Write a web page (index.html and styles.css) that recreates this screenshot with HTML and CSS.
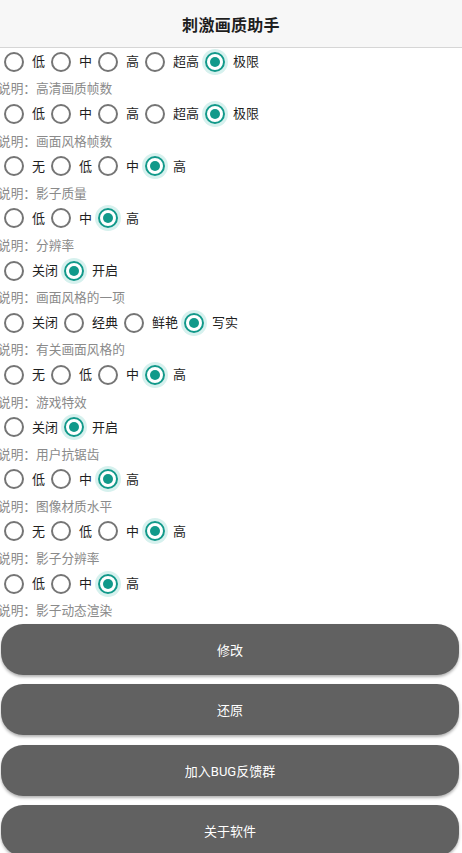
FILE: index.html
```html
<!DOCTYPE html>
<html lang="zh">
<head>
<meta charset="utf-8">
<title>刺激画质助手</title>
<link rel="stylesheet" href="styles.css">
</head>
<body>
<header class="appbar"><h1 class="title">刺激画质助手</h1></header>
<main class="content">
  <div class="row">
    <span class="opt"><i class="radio"></i><span class="lbl">低</span></span>
    <span class="opt"><i class="radio"></i><span class="lbl">中</span></span>
    <span class="opt"><i class="radio"></i><span class="lbl">高</span></span>
    <span class="opt"><i class="radio"></i><span class="lbl">超高</span></span>
    <span class="opt"><i class="radio on"></i><span class="lbl">极限</span></span>
  </div>
  <div class="desc">说明：高清画质帧数</div>
  <div class="row">
    <span class="opt"><i class="radio"></i><span class="lbl">低</span></span>
    <span class="opt"><i class="radio"></i><span class="lbl">中</span></span>
    <span class="opt"><i class="radio"></i><span class="lbl">高</span></span>
    <span class="opt"><i class="radio"></i><span class="lbl">超高</span></span>
    <span class="opt"><i class="radio on"></i><span class="lbl">极限</span></span>
  </div>
  <div class="desc">说明：画面风格帧数</div>
  <div class="row">
    <span class="opt"><i class="radio"></i><span class="lbl">无</span></span>
    <span class="opt"><i class="radio"></i><span class="lbl">低</span></span>
    <span class="opt"><i class="radio"></i><span class="lbl">中</span></span>
    <span class="opt"><i class="radio on"></i><span class="lbl">高</span></span>
  </div>
  <div class="desc">说明：影子质量</div>
  <div class="row">
    <span class="opt"><i class="radio"></i><span class="lbl">低</span></span>
    <span class="opt"><i class="radio"></i><span class="lbl">中</span></span>
    <span class="opt"><i class="radio on"></i><span class="lbl">高</span></span>
  </div>
  <div class="desc">说明：分辨率</div>
  <div class="row">
    <span class="opt"><i class="radio"></i><span class="lbl">关闭</span></span>
    <span class="opt"><i class="radio on"></i><span class="lbl">开启</span></span>
  </div>
  <div class="desc">说明：画面风格的一项</div>
  <div class="row">
    <span class="opt"><i class="radio"></i><span class="lbl">关闭</span></span>
    <span class="opt"><i class="radio"></i><span class="lbl">经典</span></span>
    <span class="opt"><i class="radio"></i><span class="lbl">鲜艳</span></span>
    <span class="opt"><i class="radio on"></i><span class="lbl">写实</span></span>
  </div>
  <div class="desc">说明：有关画面风格的</div>
  <div class="row">
    <span class="opt"><i class="radio"></i><span class="lbl">无</span></span>
    <span class="opt"><i class="radio"></i><span class="lbl">低</span></span>
    <span class="opt"><i class="radio"></i><span class="lbl">中</span></span>
    <span class="opt"><i class="radio on"></i><span class="lbl">高</span></span>
  </div>
  <div class="desc">说明：游戏特效</div>
  <div class="row">
    <span class="opt"><i class="radio"></i><span class="lbl">关闭</span></span>
    <span class="opt"><i class="radio on"></i><span class="lbl">开启</span></span>
  </div>
  <div class="desc">说明：用户抗锯齿</div>
  <div class="row">
    <span class="opt"><i class="radio"></i><span class="lbl">低</span></span>
    <span class="opt"><i class="radio"></i><span class="lbl">中</span></span>
    <span class="opt"><i class="radio on"></i><span class="lbl">高</span></span>
  </div>
  <div class="desc">说明：图像材质水平</div>
  <div class="row">
    <span class="opt"><i class="radio"></i><span class="lbl">无</span></span>
    <span class="opt"><i class="radio"></i><span class="lbl">低</span></span>
    <span class="opt"><i class="radio"></i><span class="lbl">中</span></span>
    <span class="opt"><i class="radio on"></i><span class="lbl">高</span></span>
  </div>
  <div class="desc">说明：影子分辨率</div>
  <div class="row">
    <span class="opt"><i class="radio"></i><span class="lbl">低</span></span>
    <span class="opt"><i class="radio"></i><span class="lbl">中</span></span>
    <span class="opt"><i class="radio on"></i><span class="lbl">高</span></span>
  </div>
  <div class="desc">说明：影子动态渲染</div>

  <div class="buttons">
    <button class="btn">修改</button>
    <button class="btn">还原</button>
    <button class="btn">加入BUG反馈群</button>
    <button class="btn">关于软件</button>
  </div>
</main>
</body>
</html>
```
FILE: styles.css
```css
html, body {
  margin: 0;
  padding: 0;
  background: #ffffff;
}
body {
  width: 462px;
  height: 853px;
  overflow: hidden;
  font-family: Roboto, "Noto Sans CJK SC", "Noto Sans", sans-serif;
  color: #222;
}
.appbar {
  height: 47px;
  background: #f7f7f7;
  border-bottom: 1px solid #d6d6d6;
  display: flex;
  align-items: center;
  justify-content: center;
  position: relative;
  z-index: 2;
}
.title {
  margin: 0;
  font-size: 16px;
  font-weight: bold;
  color: #1e1e1e;
  letter-spacing: 0.3px;
}
.content {
  display: flex;
  flex-direction: column;
}
.row {
  height: 27.6px;
  display: flex;
  align-items: center;
}
.opt {
  display: inline-flex;
  align-items: center;
  padding-left: 4px;
  padding-right: 2px;
}
.radio {
  width: 20px;
  height: 20px;
  box-sizing: border-box;
  border: 2px solid #757575;
  border-radius: 50%;
  display: inline-block;
  position: relative;
  flex: none;
}
.radio.on {
  border-color: #11998a;
  box-shadow: 0 0 0 3px rgba(0, 170, 150, 0.16);
}
.radio.on::after {
  content: "";
  position: absolute;
  left: 3px;
  top: 3px;
  width: 10px;
  height: 10px;
  border-radius: 50%;
  background: #11998a;
}
.lbl {
  margin-left: 8px;
  font-size: 13px;
  color: #1f1f1f;
  line-height: 1;
}
.desc {
  height: 24.6px;
  display: flex;
  align-items: center;
  margin-left: -2px;
  font-size: 12.7px;
  color: #8a8a8a;
}
.buttons {
  display: flex;
  flex-direction: column;
  gap: 9.5px;
  padding: 1.5px 3px 0 1px;
}
.btn {
  height: 51px;
  flex: none;
  border: none;
  border-radius: 22px;
  background: #616161;
  color: #ffffff;
  font-family: Roboto, "Noto Sans CJK SC", "Noto Sans", sans-serif;
  font-size: 13px;
  box-shadow: 0 2px 3px rgba(0, 0, 0, 0.3);
  padding: 0;
}
```
